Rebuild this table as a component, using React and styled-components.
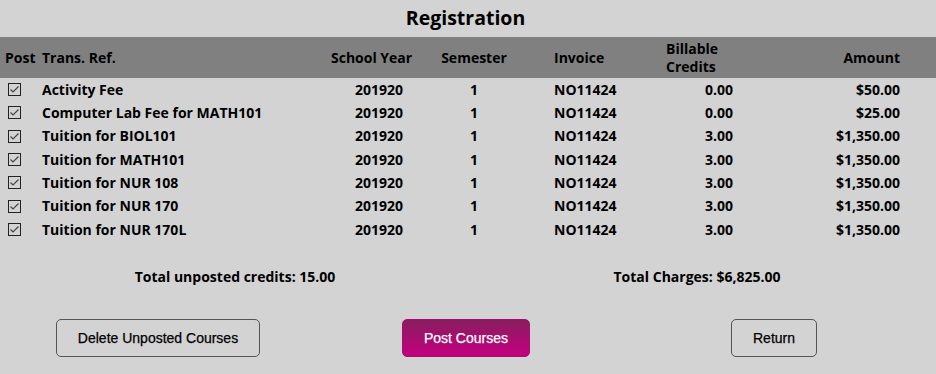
import React from 'react'
import styled, { createGlobalStyle } from 'styled-components'

const GlobalStyle = createGlobalStyle`
  html, body {
    margin: 0;
    padding: 0;
    background: #d3d3d3;
  }
  body {
    font-family: "Open Sans", "Liberation Sans", sans-serif;
    color: #000;
  }
`

// column widths from the left edge, and how header / body text sits in each
const columns = [
  { key: 'post', label: 'Post', w: 42, head: 'left', pad: 5 },
  { key: 'ref', label: 'Trans. Ref.', w: 289, head: 'left' },
  { key: 'year', label: 'School Year', w: 96, head: 'left' },
  { key: 'sem', label: 'Semester', w: 94, head: 'center' },
  { key: 'inv', label: 'Invoice', w: 145, head: 'left', pad: 33 },
  { key: 'credits', label: ['Billable', 'Credits'], w: 94, head: 'left' },
  { key: 'amount', label: 'Amount', w: 140, head: 'right' },
]

const rows = [
  { ref: 'Activity Fee', credits: '0.00', amount: '$50.00' },
  { ref: 'Computer Lab Fee for MATH101', credits: '0.00', amount: '$25.00' },
  { ref: 'Tuition for BIOL101', credits: '3.00', amount: '$1,350.00' },
  { ref: 'Tuition for MATH101', credits: '3.00', amount: '$1,350.00' },
  { ref: 'Tuition for NUR 108', credits: '3.00', amount: '$1,350.00' },
  { ref: 'Tuition for NUR 170', credits: '3.00', amount: '$1,350.00' },
  { ref: 'Tuition for NUR 170L', credits: '3.00', amount: '$1,350.00' },
]

const gridCols = columns.map(c => `${c.w}px`).join(' ') + ' 1fr'

const Page = styled.div`
  width: 936px;
  height: 374px;
  background: #d3d3d3;
  overflow: hidden;
`

const Title = styled.h1`
  margin: 0;
  height: 37px;
  line-height: 35px;
  text-align: center;
  font-size: 19.5px;
  font-weight: 700;
  padding-right: 5px;
`

const HeaderBar = styled.div`
  display: grid;
  grid-template-columns: ${gridCols};
  height: 41px;
  align-items: center;
  background: #808080;
  font-size: 14px;
  font-weight: 700;
  line-height: 18px;
`

const HeadCell = styled.div`
  text-align: ${p => p.$align};
  padding-left: ${p => p.$pad || 0}px;
  white-space: nowrap;
`

const Row = styled.div`
  display: grid;
  grid-template-columns: ${gridCols};
  height: 23.33px;
  align-items: center;
  font-size: 14px;
  font-weight: 700;
  line-height: 20px;
`

const Cell = styled.div`
  text-align: ${p => p.$align};
  padding-left: ${p => p.$pad || 0}px;
  padding-right: ${p => p.$padR || 0}px;
  white-space: nowrap;
`

const CheckCell = styled.div`
  display: flex;
  align-items: center;
  padding-left: 8px;
  svg {
    display: block;
  }
`

const Totals = styled.div`
  display: grid;
  grid-template-columns: 1fr 1fr;
  height: 78px;
  padding: 26px 8px 0 4px;
  box-sizing: border-box;
  font-size: 14px;
  font-weight: 700;
  line-height: 20px;
  text-align: center;
`

const Actions = styled.div`
  display: grid;
  grid-template-columns: repeat(3, 1fr);
  padding: 0 8px 0 4px;
  justify-items: center;
`

const Button = styled.button`
  height: 38px;
  padding: 0 21px;
  border-radius: 5px;
  font-family: "Liberation Sans", Arial, sans-serif;
  font-size: 14px;
  cursor: pointer;
  -webkit-text-stroke: 0.25px currentColor;
  border: 1px solid ${p => (p.$primary ? '#a0106e' : '#555')};
  color: ${p => (p.$primary ? '#fff' : '#000')};
  background: ${p => (p.$primary ? 'linear-gradient(#891d5f, #c4007f)' : 'transparent')};
`

const CheckIcon = () => (
  <svg width="13" height="13" viewBox="0 0 13 13">
    <rect x="0.5" y="0.5" width="12" height="12" fill="none" stroke="#222" />
    <polyline points="2.5,6.5 5,9 10.5,3.5" fill="none" stroke="#444" strokeWidth="1.2" />
  </svg>
)

const App = () => {
  return (
    <Page>
      <GlobalStyle />
      <Title>Registration</Title>
      <HeaderBar>
        {columns.map(c => (
          <HeadCell key={c.key} $align={c.head} $pad={c.pad}>
            {Array.isArray(c.label) ? c.label.map(l => <div key={l}>{l}</div>) : c.label}
          </HeadCell>
        ))}
      </HeaderBar>
      {rows.map(r => (
        <Row key={r.ref}>
          <CheckCell><CheckIcon /></CheckCell>
          <Cell $align="left">{r.ref}</Cell>
          <Cell $align="center">201920</Cell>
          <Cell $align="center">1</Cell>
          <Cell $align="left" $pad={33}>NO11424</Cell>
          <Cell $align="right" $padR={27}>{r.credits}</Cell>
          <Cell $align="right">{r.amount}</Cell>
        </Row>
      ))}
      <Totals>
        <div>Total unposted credits: 15.00</div>
        <div>Total Charges: $6,825.00</div>
      </Totals>
      <Actions>
        <Button>Delete Unposted Courses</Button>
        <Button $primary>Post Courses</Button>
        <Button>Return</Button>
      </Actions>
    </Page>
  )
}

export default App
